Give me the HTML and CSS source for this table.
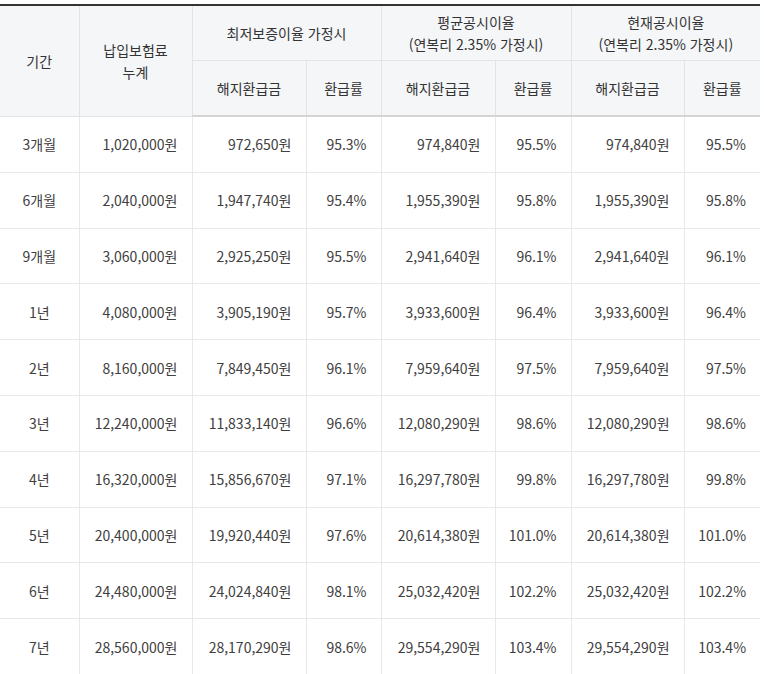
FILE: index.html
```html
<!DOCTYPE html>
<html lang="ko">
<head>
<meta charset="utf-8">
<link rel="stylesheet" href="styles.css">
</head>
<body>
<div class="wrap">
<table class="refund">
  <colgroup>
    <col class="c-period"><col class="c-paid"><col class="c-amt"><col class="c-rate">
    <col class="c-amt"><col class="c-rate2"><col class="c-amt2"><col class="c-rate2">
  </colgroup>
  <thead>
    <tr>
      <th rowspan="2" class="first">기간</th>
      <th rowspan="2">납입보험료<br>누계</th>
      <th colspan="2">최저보증이율 가정시</th>
      <th colspan="2">평균공시이율<br>(연복리 2.35% 가정시)</th>
      <th colspan="2" class="last">현재공시이율<br>(연복리 2.35% 가정시)</th>
    </tr>
    <tr>
      <th>해지환급금</th><th>환급률</th>
      <th>해지환급금</th><th>환급률</th>
      <th>해지환급금</th><th class="last">환급률</th>
    </tr>
  </thead>
  <tbody>
    <tr><td class="first">3개월</td><td class="num">1,020,000원</td><td class="num">972,650원</td><td class="num">95.3%</td><td class="num">974,840원</td><td class="num">95.5%</td><td class="num">974,840원</td><td class="num last">95.5%</td></tr>
    <tr><td class="first">6개월</td><td class="num">2,040,000원</td><td class="num">1,947,740원</td><td class="num">95.4%</td><td class="num">1,955,390원</td><td class="num">95.8%</td><td class="num">1,955,390원</td><td class="num last">95.8%</td></tr>
    <tr><td class="first">9개월</td><td class="num">3,060,000원</td><td class="num">2,925,250원</td><td class="num">95.5%</td><td class="num">2,941,640원</td><td class="num">96.1%</td><td class="num">2,941,640원</td><td class="num last">96.1%</td></tr>
    <tr><td class="first">1년</td><td class="num">4,080,000원</td><td class="num">3,905,190원</td><td class="num">95.7%</td><td class="num">3,933,600원</td><td class="num">96.4%</td><td class="num">3,933,600원</td><td class="num last">96.4%</td></tr>
    <tr><td class="first">2년</td><td class="num">8,160,000원</td><td class="num">7,849,450원</td><td class="num">96.1%</td><td class="num">7,959,640원</td><td class="num">97.5%</td><td class="num">7,959,640원</td><td class="num last">97.5%</td></tr>
    <tr><td class="first">3년</td><td class="num">12,240,000원</td><td class="num">11,833,140원</td><td class="num">96.6%</td><td class="num">12,080,290원</td><td class="num">98.6%</td><td class="num">12,080,290원</td><td class="num last">98.6%</td></tr>
    <tr><td class="first">4년</td><td class="num">16,320,000원</td><td class="num">15,856,670원</td><td class="num">97.1%</td><td class="num">16,297,780원</td><td class="num">99.8%</td><td class="num">16,297,780원</td><td class="num last">99.8%</td></tr>
    <tr><td class="first">5년</td><td class="num">20,400,000원</td><td class="num">19,920,440원</td><td class="num">97.6%</td><td class="num">20,614,380원</td><td class="num">101.0%</td><td class="num">20,614,380원</td><td class="num last">101.0%</td></tr>
    <tr><td class="first">6년</td><td class="num">24,480,000원</td><td class="num">24,024,840원</td><td class="num">98.1%</td><td class="num">25,032,420원</td><td class="num">102.2%</td><td class="num">25,032,420원</td><td class="num last">102.2%</td></tr>
    <tr><td class="first">7년</td><td class="num">28,560,000원</td><td class="num">28,170,290원</td><td class="num">98.6%</td><td class="num">29,554,290원</td><td class="num">103.4%</td><td class="num">29,554,290원</td><td class="num last">103.4%</td></tr>
  </tbody>
</table>
</div>
</body>
</html>
```

FILE: styles.css
```css
html, body {
  margin: 0;
  padding: 0;
  background: #fff;
}
.wrap {
  padding-top: 4px;
  width: 760px;
}
.refund {
  width: 760px;
  table-layout: fixed;
  border-collapse: collapse;
  border-top: 2px solid #333;
  font-family: "Noto Sans CJK KR", "Noto Sans", sans-serif;
  font-size: 14px;
  color: #404040;
}
.c-period { width: 79px; }
.c-paid { width: 113px; }
.c-amt { width: 114px; }
.c-rate { width: 75px; }
.c-rate2 { width: 76px; }
.c-amt2 { width: 113px; }
.refund th {
  background: #f5f6f8;
  font-weight: normal;
  color: #333;
  height: 54px;
  padding: 0;
  line-height: 22px;
  text-align: center;
  border: 1px solid #e3e4e6;
}
.refund thead tr:last-child th {
  border-bottom: 2px solid #d4d4d4;
}
.refund td {
  height: 54.8px;
  padding: 0 14px 0 0;
  text-align: center;
  border: 1px solid #e8e8e8;
  line-height: 20px;
}
.refund td.first {
  padding: 0;
  text-align: center;
}
.refund td.num {
  text-align: right;
}
.refund .first { border-left: none; }
.refund .last { border-right: none; }
```
